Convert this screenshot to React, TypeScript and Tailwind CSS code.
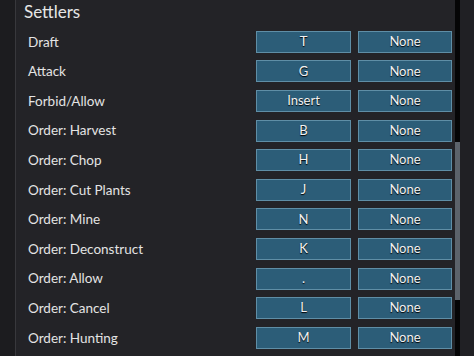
import React from 'react';

const rows: [string, string][] = [
  ['Draft', 'T'],
  ['Attack', 'G'],
  ['Forbid/Allow', 'Insert'],
  ['Order: Harvest', 'B'],
  ['Order: Chop', 'H'],
  ['Order: Cut Plants', 'J'],
  ['Order: Mine', 'N'],
  ['Order: Deconstruct', 'K'],
  ['Order: Allow', '.'],
  ['Order: Cancel', 'L'],
  ['Order: Hunting', 'M'],
];

function KeyButton({ label, className }: { label: string; className: string }) {
  return (
    <div
      className={`h-[22px] flex items-center justify-center bg-[#2c5d78] border border-[#5f8ea6] text-[13px] text-[#f2f2f2] [text-shadow:0_1px_1px_#000] ${className}`}
    >
      {label}
    </div>
  );
}

export default function App() {
  return (
    <div
      className="w-[474px] h-[356px] overflow-hidden flex bg-[#1d1d20]"
      style={{ fontFamily: 'Lato, "Open Sans", sans-serif' }}
    >
      <div className="w-[15px] bg-[#1c1c1f]" />
      <div className="w-px bg-[#38383c]" />
      <div className="w-[439px] bg-[#232327] flex flex-col">
        <div className="h-[27px] pl-[8px] pt-[2px] text-[17px] leading-[20px] text-[#e6e6e6]">Settlers</div>
        {rows.map(([name, key]) => (
          <div key={name} className="h-[29.6px] flex items-center shrink-0">
            <div className="pl-[12px] w-[240px] text-[13.5px] text-[#e4e4e4]">{name}</div>
            <KeyButton label={key} className="w-[95px]" />
            <KeyButton label="None" className="w-[94px] ml-[7px]" />
          </div>
        ))}
      </div>
      <div className="w-[5px] bg-[#050506] relative">
        <div className="absolute left-0 right-0 top-[142px] h-[158px] bg-[#5c636b]" />
      </div>
      <div className="w-[14px] bg-[#202024]" />
    </div>
  );
}
